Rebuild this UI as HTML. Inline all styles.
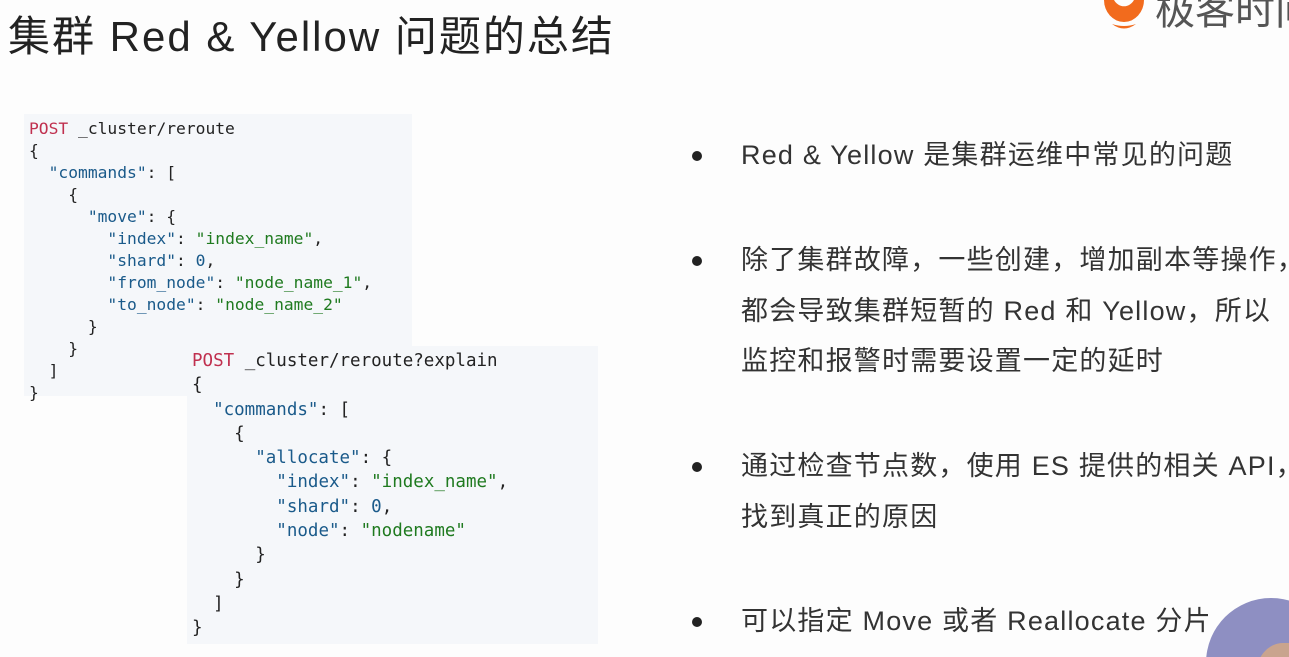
<!DOCTYPE html>
<html style="overflow:hidden"><head><meta charset="utf-8"><style>
html,body{overflow:hidden}
body{margin:0;width:1289px;height:657px;overflow:hidden;background:#fdfdfd;position:relative;font-family:"Liberation Sans","Noto Sans CJK SC",sans-serif;}
.t{position:absolute;left:8px;top:3px;font-size:42px;color:#222;white-space:nowrap;letter-spacing:2px}
.code{position:absolute;background:#f5f7fa;font-family:"DejaVu Sans Mono","Liberation Mono",monospace;white-space:pre;color:#222;}
.c1{left:24px;top:114px;width:388px;height:282px;font-size:16.3px;line-height:22px;padding:4px 0 0 5px;box-sizing:border-box}
.c2{left:187px;top:346px;width:411px;height:298px;font-size:17.5px;line-height:24.3px;padding:3px 0 0 5px;box-sizing:border-box}
.r{color:#c0304f}.k{color:#1a5a8a}.s{color:#1f7a1f}
.b{position:absolute;left:741px;font-size:27px;line-height:32px;color:#333;white-space:nowrap;letter-spacing:1.2px}
.d{position:absolute;left:692px;width:10px;height:10px;border-radius:50%;background:#222}
</style></head><body>
<div class="t">集群 Red &amp; Yellow 问题的总结</div>
<svg style="position:absolute;left:1100px;top:0" width="50" height="32"><path d="M4 0 A20 22 0 0 0 44 0 L34 0 A12 14 0 0 1 14 0Z" fill="#f26b1d"/><path d="M12 24 Q24 33 36 24 Q24 28 12 24Z" fill="#f26b1d"/></svg>
<div style="position:absolute;left:1155px;top:-14px;font-size:40px;line-height:50px;color:#555;white-space:nowrap">极客时间</div>
<div class="code c1"><span class="r">POST</span> _cluster/reroute
{
  <span class="k">"commands"</span>: [
    {
      <span class="k">"move"</span>: {
        <span class="k">"index"</span>: <span class="s">"index_name"</span>,
        <span class="k">"shard"</span>: <span class="k">0</span>,
        <span class="k">"from_node"</span>: <span class="s">"node_name_1"</span>,
        <span class="k">"to_node"</span>: <span class="s">"node_name_2"</span>
      }
    }
  ]
}</div>
<div class="code c2"><span class="r">POST</span> _cluster/reroute?explain
{
  <span class="k">"commands"</span>: [
    {
      <span class="k">"allocate"</span>: {
        <span class="k">"index"</span>: <span class="s">"index_name"</span>,
        <span class="k">"shard"</span>: <span class="k">0</span>,
        <span class="k">"node"</span>: <span class="s">"nodename"</span>
      }
    }
  ]
}</div>
<div class="d" style="top:151px"></div><div class="b" style="top:139px">Red &amp; Yellow 是集群运维中常见的问题</div>
<div class="d" style="top:256px"></div><div class="b" style="top:244px">除了集群故障，一些创建，增加副本等操作，</div>
<div class="b" style="top:295px">都会导致集群短暂的 Red 和 Yellow，所以</div>
<div class="b" style="top:345px">监控和报警时需要设置一定的延时</div>
<div class="d" style="top:462px"></div><div class="b" style="top:450px">通过检查节点数，使用 ES 提供的相关 API，</div>
<div class="b" style="top:501px">找到真正的原因</div>
<div class="d" style="top:617px"></div><div class="b" style="top:605px">可以指定 Move 或者 Reallocate 分片</div>
<div style="position:absolute;left:1206px;top:598px;width:83px;height:59px;overflow:hidden"><div style="position:absolute;left:0;top:0;width:130px;height:130px;border-radius:50%;background:#8e8fc2;overflow:hidden"><div style="position:absolute;left:50px;top:45px;width:60px;height:70px;border-radius:45%;background:#c9a48e"></div></div></div>
</body></html>
